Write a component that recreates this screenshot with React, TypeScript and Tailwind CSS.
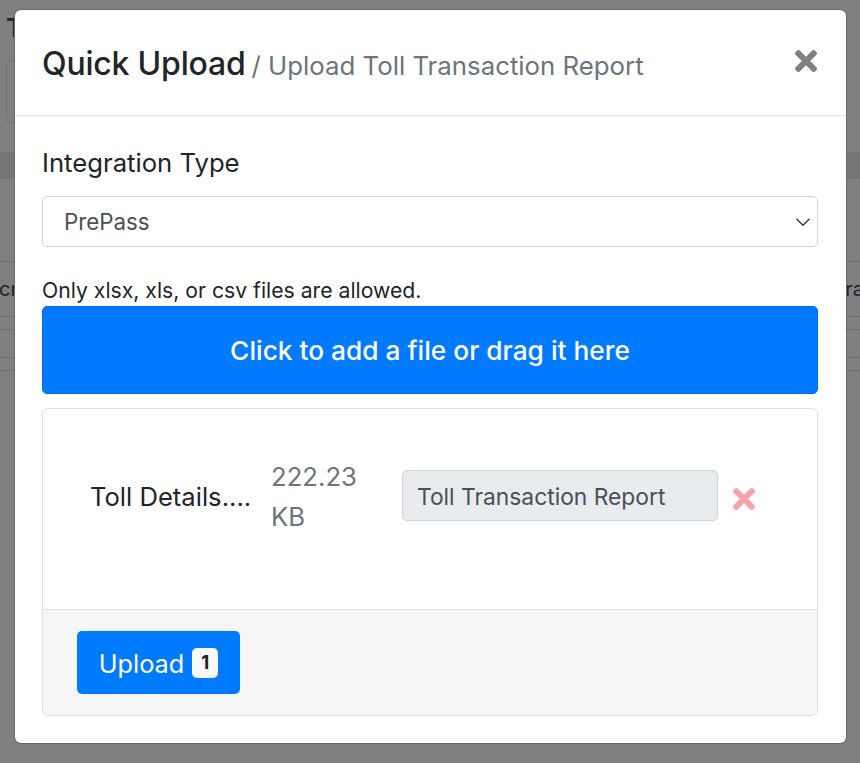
import { FaTimes } from "react-icons/fa";

const font = { fontFamily: "Inter, 'Noto Sans', sans-serif" };

export default function App() {
  return (
    <div className="relative h-[763px] w-[860px] overflow-hidden bg-[#808080] font-['Inter','Liberation_Sans',sans-serif]">
      {/* dimmed page behind the modal */}
      <div aria-hidden className="flex h-full flex-col">
        <div className="h-[15px] shrink-0" />
        <div className="pl-[6px] text-[26px] leading-[26px] font-semibold text-[#222]">T</div>
        <div className="mt-[19px] ml-[6px] h-[63px] w-[40px] shrink-0 rounded-[5px] border border-[#737373]" />
        <div className="mt-[29px] h-[27px] shrink-0 bg-[#767676]" />
        <div className="mt-[82px] flex h-[56px] shrink-0 items-center justify-between border-y border-[#6e6e6e] text-[20px] text-[#222]">
          <span className="-ml-[1px]">cr</span>
          <span className="-mr-[4px]">Tra</span>
        </div>
        <div className="mt-[12px] h-[29px] shrink-0 border-y border-[#6e6e6e]" />
        <div className="mt-[12px] h-px shrink-0 bg-[#6e6e6e]" />
      </div>

      {/* modal */}
      <div className="absolute top-[10px] left-[15px] flex h-[733px] w-[831px] flex-col rounded-[6px] bg-white shadow-[0_0_0_1px_#6a6a6a]" style={font}>
        <div className="flex h-[106px] shrink-0 items-start justify-between border-b border-[#dee2e6] pr-[29px] pl-[27px]">
          <div className="mt-[32px] flex items-baseline">
            <span className="text-[32px] leading-[44px] font-medium tracking-[-0.2px] text-[#212529]">Quick Upload</span>
            <span className="ml-[6px] text-[25.8px] leading-[44px] text-[#6c757d]">/ Upload Toll Transaction Report</span>
          </div>
          <FaTimes className="mt-[35px] h-[32px] w-[22px] text-[#808080]" />
        </div>

        <div className="flex flex-1 flex-col pr-[28px] pl-[27px]">
          <div className="mt-[30px] text-[25.7px] leading-[34px] text-[#212529]">Integration Type</div>
          <div className="mt-[16px] flex h-[51px] shrink-0 items-center justify-between rounded-[5px] border border-[#ced4da] pr-[6px] pl-[21px] text-[22.3px] text-[#495057]">
            <span>PrePass</span>
            <svg viewBox="0 0 16 16" className="h-[16px] w-[16px]" fill="none" stroke="#343a40" strokeWidth="1.4">
              <path d="M1.5 4.8 8 11.2l6.5-6.4" />
            </svg>
          </div>
          <div className="mt-[28px] mb-[1px] text-[21.2px] leading-[30px] text-[#212529]">Only xlsx, xls, or csv files are allowed.</div>
          <div className="flex h-[88px] shrink-0 items-center justify-center rounded-[5px] border border-[#006fe6] bg-[#007bff] pt-[2px] text-[26.3px] font-medium text-white">
            Click to add a file or drag it here
          </div>

          <div className="mt-[14px] flex h-[308px] shrink-0 flex-col rounded-[6px] border border-[#dfdfdf]">
            <div className="flex h-[200px] shrink-0 items-start">
              <div className="mt-[68px] ml-[47px] w-[181px] text-[25.6px] leading-[40px] text-[#212529]">Toll Details....</div>
              <div className="mt-[48px] w-[131px] text-[25.7px] leading-[40px] text-[#6c757d]">222.23<br />KB</div>
              <div className="mt-[61px] flex h-[51px] w-[316px] items-center rounded-[5px] border border-[#ced4da] bg-[#e9ecef] pt-[3px] pl-[14px] text-[22.8px] text-[#495057]">
                Toll Transaction Report
              </div>
              <FaTimes className="mt-[74px] ml-[15px] h-[32px] w-[22px] text-[#f5a3aa]" />
            </div>
            <div className="flex-1 rounded-b-[5px] border-t border-[#dfdfdf] bg-[#f6f6f6] pt-[21px] pl-[34px]">
              <div className="flex h-[63px] w-[163px] items-center justify-center rounded-[5px] bg-[#007bff] text-[25.3px] text-white">
                <span className="pt-[2px]">Upload</span>
                <span className="ml-[8px] flex h-[30px] w-[26px] items-center justify-center rounded-[5px] bg-[#f8f9fa] text-[18.5px] font-bold text-[#212529]">1</span>
              </div>
            </div>
          </div>
        </div>
      </div>
    </div>
  );
}
